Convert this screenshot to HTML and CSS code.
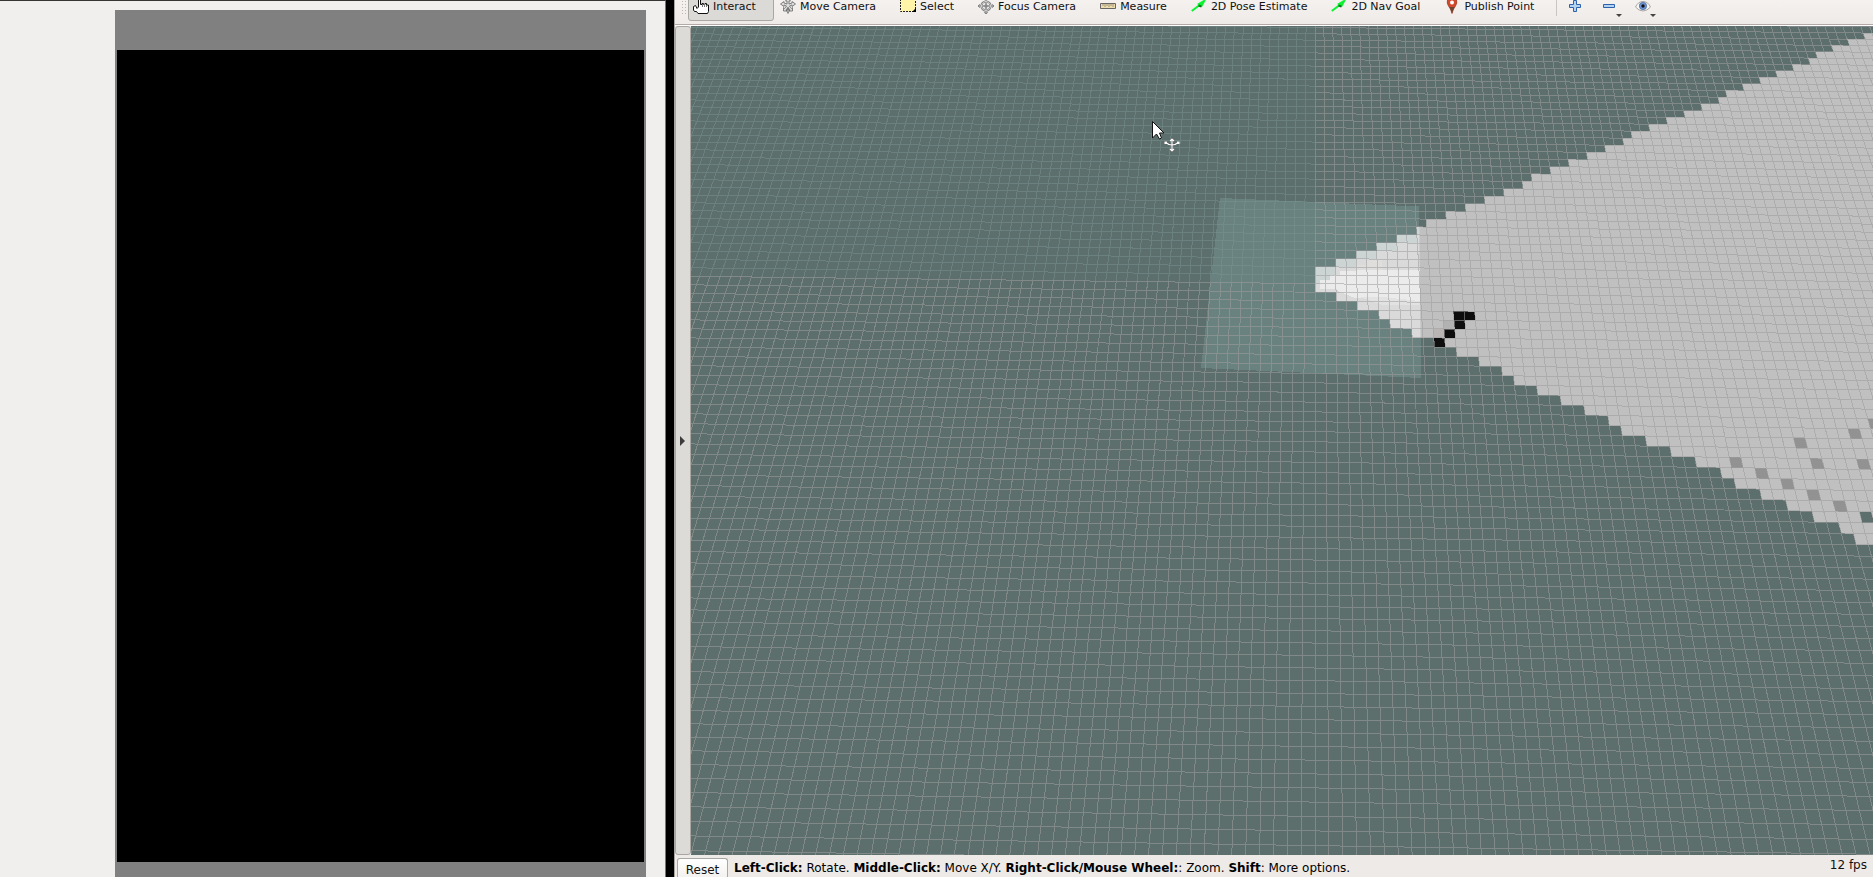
FILE: index.html
```html
<!DOCTYPE html>
<html lang="en">
<head>
<meta charset="utf-8">
<title>RViz</title>
<link rel="stylesheet" href="styles.css">
</head>
<body>
<div class="desktop">
  <section class="camera" aria-label="Camera window">
    <div class="camera-frame"><div class="camera-image"></div></div>
  </section>
  <main class="rviz">
    <div class="toolbar" role="toolbar">
      <span class="grip"></span>
      <button class="tool active"><svg class="icon" viewBox="0 0 16 16"><path d="M5.500 9V1.500Q5.500 0.500 6.500 .5T7.500 1.500V6.500H9V5.500H10.500V6.500H12V5.500H13.500V7H15.500V13.500L14.500 15.500H5L3.500 13.500H1.500L.5 12V8.500L2.500 7.500L4 10.500Z" fill="#fff" stroke="#111"/><path d="M9.500 6v3M11.500 6v3M13.500 7v2" stroke="#777"/></svg>Interact</button>
      <button class="tool"><svg class="icon" viewBox="0 0 16 16"><path d="M8 0L5.500 3H7V6L4 5V3.500L.5 6L4 8.500V7L6.500 8L4.500 10.500L3.500 9.500V13H7L6 12L8 9.500V12H6.500L8 15.500L9.500 12H8V9.500L10 12L9 13H12.500V9.500L11.500 10.500L9.500 8L12 7V8.500L15.500 6L12 3.500V5L9 6V3H10.500Z" fill="#ddd" stroke="#666" stroke-width=".8"/></svg>Move Camera</button>
      <button class="tool"><svg class="icon" viewBox="0 0 16 16"><path d="M.5 0H15.500V13.500H.5Z" fill="#fff4a8" stroke="#222" stroke-dasharray="2 1"/><path d="M16 10V14H12Z" fill="#000"/></svg>Select</button>
      <button class="tool"><svg class="icon" viewBox="0 0 16 16"><circle cx="8" cy="8" r="4.500" fill="none" stroke="#777" stroke-width="2.200"/><path d="M8 0v16M0 8h16" stroke="#777" stroke-width="2.200"/><path d="M6 2L8 0L10 2M6 14L8 16L10 14M2 6L0 8L2 10M14 6L16 8L14 10" stroke="#888" stroke-width=".8"/><circle cx="8" cy="8" r="4.500" fill="none" stroke="#ddd" stroke-width=".8"/><path d="M8 1v14M1 8h14" stroke="#ddd" stroke-width=".8"/><circle cx="8" cy="8" r="1.500" fill="#888"/></svg>Focus Camera</button>
      <button class="tool"><svg class="icon" viewBox="0 0 16 16"><path d="M.5 5.500H15.500V10.500H.5Z" fill="#ecdcae" stroke="#666"/><path d="M3 6v2M5 6v3M7 6v2M9 6v3M11 6v2M13 6v3" stroke="#8a8068" stroke-width=".8"/></svg>Measure</button>
      <button class="tool"><svg class="icon" viewBox="0 0 16 16"><path d="M.8 13L10 6" stroke="#0cf332" stroke-width="2"/><path d="M6 6L16 0L11 9Z" fill="#0cf332"/><path d="M7.500 7.500l3 1" stroke="#087719" stroke-width="2"/></svg>2D Pose Estimate</button>
      <button class="tool"><svg class="icon" viewBox="0 0 16 16"><path d="M.8 13L10 6" stroke="#0cf332" stroke-width="2"/><path d="M6 6L16 0L11 9Z" fill="#0cf332"/><path d="M7.500 7.500l3 1" stroke="#087719" stroke-width="2"/></svg>2D Nav Goal</button>
      <button class="tool"><svg class="icon" viewBox="0 0 16 16"><path d="M8 15.500Q7 11 4.500 8Q2.500 5 3.500 2Q5-.5 8-.5T12.500 2Q13.500 5 11.500 8Q9 11 8 15.500Z" fill="#d24a2c" stroke="#9b3118" stroke-width=".7"/><path d="M5.500 9h5L8 15Z" fill="#6a4634"/><circle cx="8" cy="4.500" r="2" fill="#fff"/></svg>Publish Point</button>
      <span class="separator"></span>
      <button class="tool small" aria-label="Add tool"><svg class="icon" viewBox="0 0 16 16"><path d="M6.500 2.500h3v4h4v3h-4v4h-3v-4h-4v-3h4Z" fill="#b5d3f1" stroke="#2c62ad"/></svg></button>
      <button class="tool small" aria-label="Remove tool"><svg class="icon" viewBox="0 0 16 16"><path d="M2.500 6.500h11v3h-11Z" fill="#b5d3f1" stroke="#2c62ad"/></svg><i class="drop"></i></button>
      <button class="tool small" aria-label="Tool visibility"><svg class="icon" viewBox="0 0 16 16"><path d="M.5 9Q3 3.500 8 3.500T15.500 9Q12 13 8 13T.5 9Z" fill="#f7f7f5" stroke="#aaa59f"/><circle cx="8" cy="8" r="3.700" fill="#6f93d1" stroke="#3d5f9c" stroke-width=".6"/><circle cx="8" cy="8" r="1.700" fill="#111"/></svg><i class="drop"></i></button>
    </div>
    <div class="workspace">
      <button class="dock" aria-label="Show displays panel"></button>
      <div class="view">
        <svg id="scene" class="scene" viewBox="691 26 1182 829" preserveAspectRatio="xMinYMin slice" shape-rendering="crispEdges" role="img" aria-label="Occupancy map"></svg>
      </div>
    </div>
    <footer class="status">
      <button class="reset">Reset</button>
      <p class="hint"><b>Left-Click:</b> Rotate. <b>Middle-Click:</b> Move X/Y. <b>Right-Click/Mouse Wheel:</b>: Zoom. <b>Shift</b>: More options.</p>
      <span class="fps">12 fps</span>
    </footer>
  </main>
</div>
<script src="scene.js"></script>
</body>
</html>
```
FILE: styles.css
```css
* { box-sizing: border-box; }
body { margin: 0; background: #000; color: #111; font-family: "DejaVu Sans", sans-serif; font-size: 12px; }
button { font: inherit; color: inherit; }
.desktop { display: grid; grid-template-columns: 666fr 1199fr; column-gap: 8px; height: 100vh; overflow: hidden; }
.camera { display: flex; background: #f0efed; border-top: 1px solid #383436; border-right: 1px solid #777; padding: 9px 19px 0 115px; }
.camera-frame { flex: 1; display: flex; background: #808080; padding: 40px 2px 15px; }
.camera-image { flex: 1; background: #000; }
.rviz { display: flex; flex-direction: column; min-width: 0; min-height: 0; background: #eeeae7; border-left: 1px solid #aaa5a2; }
.toolbar { display: flex; align-items: flex-end; flex: none; height: 26px; padding: 0 6px 4px; gap: 1px; overflow: hidden; font-size: 11px; background: linear-gradient(#f4f1ef, #eeeae7); border-bottom: 1px solid #fff; box-shadow: inset 0 -1px #b3aaa8; }
.grip { width: 6px; height: 14px; margin-bottom: 7px; background: radial-gradient(circle, #bbb6b2 1px, transparent 1px) 0 0 / 3px 3px; }
.tool { position: relative; display: flex; flex: none; align-items: center; gap: 4px; height: 30px; padding: 0 17px 0 4px; border: 1px solid transparent; border-radius: 3px; background: none; white-space: nowrap; }
.tool.active { background: #dcdad6; border-color: #aaa7a2; }
.icon { width: 16px; height: 16px; flex: none; fill: none; }
.separator { width: 1px; height: 30px; margin: 0 4px 5px 3px; background: #c9c5c2; }
.tool.small { padding: 0 11px 0 4px; }
.drop { position: absolute; right: 6px; bottom: 3px; border: 3px solid transparent; border-top-color: #444; border-bottom: 0; }
.workspace { flex: 1; display: flex; min-height: 0; }
.dock { flex: none; width: 16px; padding: 0; display: flex; align-items: center; justify-content: center; border: 1px solid #aaa6a1; border-radius: 3px; background: #dcdbd7; }
.dock::before { content: ""; border: 5px solid transparent; border-left: 5px solid #3c3c3c; border-right: 0; margin-right: 2px; }
.view { flex: 1; min-width: 0; background: #5c6f6d; overflow: hidden; }
.scene { display: block; width: 100%; height: 100%; }
.status { flex: none; display: flex; height: 22px; padding: 3px 6px 0 2px; overflow: hidden; line-height: 20px; }
.reset { flex: none; width: 51px; height: 22px; padding: 0; line-height: 20px; border: 1px solid #aaa6a2; border-bottom: 0; border-radius: 3px 3px 0 0; background: linear-gradient(#fff, #f2f0ee); }
.hint { margin: 0 0 0 6px; flex: 1; white-space: nowrap; overflow: hidden; color: #000; }
.fps { line-height: 14px; }
```
FILE: scene.js
```js
const scene = document.getElementById("scene");
const NS = "http://www.w3.org/2000/svg";

// Perspective ground plane: columns fan out from x = 1315, rows lean slightly down to the right.
const ORIGIN_X = 1315;
const rowY = (k, x) => -1500 + (x + 149808) / 150499 / (5.6297e-4 - 2.6975e-6 * k);
const colX = (c, y) => ORIGIN_X + c * 0.00595 * (y + 1477);

function point(c, k) {
  let x = ORIGIN_X, y = rowY(k, x);
  for (let i = 0; i < 3; i++) { x = colX(c, y); y = rowY(k, x); }
  return x.toFixed(2) + " " + y.toFixed(2);
}
const quad = (c, k, c2 = c + 1, k2 = k + 1) =>
  "M" + [point(c, k), point(c2, k), point(c2, k2), point(c, k2)].join("L") + "Z";

function draw(parent, tag, attrs) {
  const el = document.createElementNS(NS, tag);
  for (const name in attrs) el.setAttribute(name, attrs[name]);
  parent.appendChild(el);
  return el;
}
const fill = (d, color, extra = {}) => draw(scene, "path", { d, fill: color, ...extra });

// First free column of each map row, from row -35 down to row 25.
const firstFree = [61, 59, 57, 55, 54, 52, 50, 48, 46, 44, 43, 41, 39, 37, 35, 33, 32, 30, 28, 26,
  24, 22, 21, 19, 17, 15, 13, 11, 10, 8, 6, 4, 2, 0, 0, 0, 2, 4, 6, 7, 9, 11, 13, 15, 17, 18,
  20, 22, 24, 26, 27, 29, 31, 33, 35, 36, 38, 40, 42, 44, 45];
const freeOutline = [];
firstFree.forEach((c, i) => freeOutline.push(point(c, i - 35), point(c, i - 34)));
const free = "M" + freeOutline.join("L") + "L" + point(70, 26) + "L" + point(80, -35) + "Z";

const local = "M1220 198L1419 206.500L1421 378L1201 368Z";
fill(local, "#69827f");
fill(free, "#c0c0c0");

const clip = draw(scene, "clipPath", { id: "local" });
draw(clip, "path", { d: local });
const near = { "clip-path": "url(#local)" };
fill(free, "#dadada", near);
for (let k = -7; k <= -1; k++) {
  const c = firstFree[k + 35];
  fill(quad(c, k, c + 2), "#cdd4d4", near);
}
fill("M1320 280L1330 280L1330 275L1340 275L1340 271L1356 271L1356 266L1370 266L1370 270L1420 270L1420 302L1400 302L1382 298L1355 298L1340 292L1336 289L1320 289Z", "#ebebeb");
fill("M1356 265L1366 265L1366 260L1382 260L1382 270L1356 270Z", "#dfdedc");
fill("M1360 297L1382 297L1420 301L1420 305L1382 305Z", "#e2e2e2");

fill(quad(11, 5), "#b8b5b4");
fill(quad(12, 4), "#b2b2b2");
const occupied = [[13, 3], [14, 3], [13, 4], [12, 5], [11, 6]];
occupied.forEach(([c, k]) => fill(quad(c, k), "#0e0e0e"));
[[49, 14], [47, 15], [42, 16], [36, 18], [43, 18], [47, 18], [38, 19], [40, 20], [42, 21], [44, 22]]
  .forEach(([c, k]) => fill(quad(c, k), "#929292"));
fill(quad(46, 23), "#5c6f6d");

let faint = "", strong = "";
for (let c = -85; c <= 85; c++) {
  const top = point(c, -38), mid = point(c, 0), bottom = point(c, 54);
  if (c < 0) faint += "M" + top + "L" + mid;
  else strong += "M" + top + "L" + mid;
  strong += "M" + mid + "L" + bottom;
}
for (let k = -38; k <= 54; k++) {
  const left = "M" + point(-85, k) + "L" + point(0, k);
  if (k < 0) faint += left; else strong += left;
  strong += "M" + point(0, k) + "L" + point(85, k);
}
draw(scene, "path", { d: faint, fill: "none", stroke: "#799491", "stroke-opacity": 0.5 });
draw(scene, "path", { d: strong, fill: "none", stroke: "#9d9d9d", "stroke-opacity": 0.56 });

// Occupied cells cover the grid lines
occupied.forEach(([c, k]) => fill(quad(c + 0.08, k + 0.08, c + 0.96, k + 0.96), "#0e0e0e"));

// Pointer with the rotate badge
const pointer = draw(scene, "g", { transform: "translate(1152 121)", "shape-rendering": "auto" });
draw(pointer, "path", { d: "M.5 .5V17L4.500 13L7.500 18L9.500 17L7.500 12H12Z", fill: "#fff", stroke: "#111" });
const badge = "M20 18V30M18 20L20 18L22 20M18 28L20 30L22 28M13 21Q20 27 27 21M13 23V21H15M27 23V21H25";
draw(pointer, "path", { d: badge, fill: "none", stroke: "#555", "stroke-width": 2 });
draw(pointer, "path", { d: badge, fill: "none", stroke: "#fff", "stroke-width": 1.2 });
```
